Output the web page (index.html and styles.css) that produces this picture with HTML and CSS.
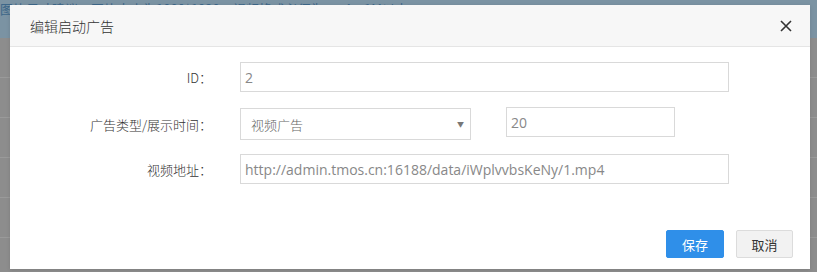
FILE: index.html
```html
<!DOCTYPE html>
<html lang="zh-CN">
<head>
    <meta charset="UTF-8">
    <title>编辑启动广告</title>
    <link rel="stylesheet" href="styles.css">
</head>
<body>
    <!-- Dimmed page behind the dialog -->
    <div class="page">
        <div class="page-top">
            <span class="page-tip">图片尺寸建议：图片大小为1080*1920，视频格式必须为mp4，1M以内。</span>
        </div>
        <div class="page-rest"></div>
    </div>

    <!-- Dialog -->
    <div class="modal">
        <div class="modal-header">
            <span class="modal-title">编辑启动广告</span>
            <button type="button" class="modal-close">
                <svg width="12" height="12" viewBox="0 0 12 12">
                    <path d="M1 1 L11 11 M11 1 L1 11" stroke="#333" stroke-width="1.6" fill="none"/>
                </svg>
            </button>
        </div>

        <div class="modal-body">
            <div class="form-row">
                <label class="form-label">ID：</label>
                <input type="text" class="form-input wide" value="2">
            </div>
            <div class="form-row">
                <label class="form-label">广告类型/展示时间：</label>
                <div class="fake-select">
                    <span>视频广告</span>
                    <span class="select-arrow">▼</span>
                </div>
                <input type="text" class="form-input short" value="20">
            </div>
            <div class="form-row">
                <label class="form-label">视频地址：</label>
                <input type="text" class="form-input wide" value="http://admin.tmos.cn:16188/data/iWplvvbsKeNy/1.mp4">
            </div>
        </div>

        <div class="modal-footer">
            <button type="button" class="btn btn-primary">保存</button>
            <button type="button" class="btn btn-default">取消</button>
        </div>
    </div>
</body>
</html>
```

FILE: styles.css
```css
/* Page */
body {
    margin: 0;
    font-family: "Noto Sans CJK SC", "Noto Sans", sans-serif;
    background: #8b8b8b;
    height: 272px;
    overflow: hidden;
    position: relative;
}

/* Background page (under the dim layer) */
.page-top {
    height: 38px;
    background: #7b93a3;
    overflow: hidden;
}

.page-tip {
    display: block;
    padding-top: 1px;
    font-size: 13px;
    line-height: 16px;
    color: #3d6789;
    white-space: nowrap;
}

.page-rest {
    height: 234px;
    background: repeating-linear-gradient(
        180deg,
        #8d8d8d 0,
        #8d8d8d 39px,
        #9a9a9a 39px,
        #9a9a9a 40px
    );
}

/* Dialog */
.modal {
    position: absolute;
    top: 5px;
    left: 10px;
    width: 800px;
    background: #fff;
    box-shadow: 0 1px 4px rgba(0, 0, 0, 0.12);
}

.modal-header {
    height: 41px;
    background: #f7f7f7;
    border-bottom: 1px solid #e5e5e5;
    display: flex;
    align-items: center;
    justify-content: space-between;
    padding: 0 18px 0 20px;
}

.modal-title {
    font-size: 14px;
    font-weight: 300;
    color: #333;
}

.modal-close {
    border: none;
    background: none;
    padding: 0;
    width: 12px;
    height: 12px;
    display: flex;
    cursor: pointer;
}

/* Form */
.modal-body {
    padding-top: 15px;
    display: flex;
    flex-direction: column;
    gap: 16px;
}

.form-row {
    display: flex;
    align-items: center;
}

.form-row + .form-row + .form-row {
    margin-top: -2px;
}

.form-label {
    width: 202px;
    margin-right: 28px;
    text-align: right;
    font-size: 13px;
    font-weight: 300;
    color: #333;
}

.form-input {
    box-sizing: border-box;
    height: 30px;
    border: 1px solid #d9d9d9;
    padding: 0 4px;
    font-family: "Open Sans", "Noto Sans CJK SC", sans-serif;
    font-size: 14px;
    color: #888;
    outline: none;
}

.form-input.wide {
    width: 489px;
}

.form-input.short {
    width: 169px;
    margin-left: 35px;
    align-self: flex-start;
    margin-top: -1px;
}

.fake-select {
    box-sizing: border-box;
    width: 231px;
    height: 32px;
    border: 1px solid #d9d9d9;
    display: flex;
    align-items: center;
    justify-content: space-between;
    padding: 0 6px 0 10px;
    font-size: 13px;
    font-weight: 300;
    color: #666;
}

.select-arrow {
    font-size: 7px;
    color: #777;
}

/* Footer buttons */
.modal-footer {
    display: flex;
    justify-content: flex-end;
    gap: 12px;
    padding: 46px 17px 11px 0;
}

.btn {
    box-sizing: border-box;
    width: 58px;
    height: 28px;
    font-family: "Noto Sans CJK SC", sans-serif;
    font-size: 13px;
    border-radius: 2px;
    cursor: pointer;
    padding: 0;
}

.btn-primary {
    background: #2f8fe9;
    border: 1px solid #2f8fe9;
    color: #fff;
}

.btn-default {
    width: 57px;
    background: #f2f2f2;
    border: 1px solid #dcdcdc;
    color: #333;
}
```
